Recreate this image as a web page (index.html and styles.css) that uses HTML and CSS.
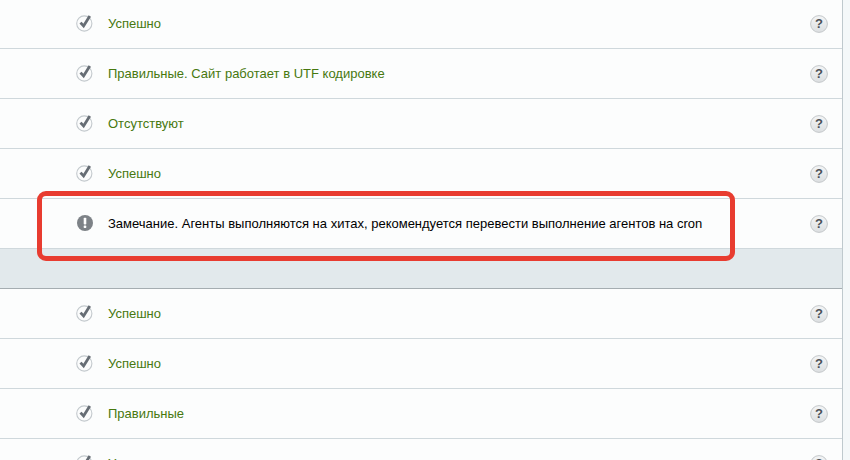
FILE: index.html
```
<!DOCTYPE html>
<html lang="ru">
<head>
<meta charset="utf-8">
<title>Проверка</title>
<link rel="stylesheet" href="styles.css">
</head>
<body>
<svg class="defs" width="0" height="0" aria-hidden="true">
  <defs>
    <linearGradient id="help-fill" x1="0" y1="0" x2="0" y2="1">
      <stop offset="0" stop-color="#f4f5f6"/>
      <stop offset="1" stop-color="#dcdfe1"/>
    </linearGradient>
  </defs>
  <symbol id="ok" viewBox="0 0 17 18">
    <circle cx="8.3" cy="9.5" r="7.6" fill="#fbfcfc" stroke="#c3c9cd" stroke-width="1.1"/>
    <path d="M4.5 8.6 L7.6 12 L13.8 2" fill="none" stroke="#666d74" stroke-width="2.8"/>
  </symbol>
  <symbol id="warn" viewBox="0 0 17 18">
    <circle cx="9" cy="9" r="8" fill="#7d8287"/>
    <rect x="7.7" y="3.8" width="2.6" height="6.8" rx="0.8" fill="#fff"/>
    <rect x="7.7" y="11.5" width="2.6" height="2.4" rx="0.6" fill="#fff"/>
  </symbol>
  <symbol id="help" viewBox="0 0 18 18">
    <circle cx="9" cy="9" r="8.4" fill="url(#help-fill)" stroke="#c4c8ca"/>
  </symbol>
</svg>
<main class="panel">
  <div class="list list-top">
    <div class="row"><svg class="status"><use href="#ok"/></svg><span class="msg">Успешно</span><span class="help"><svg class="help-bg"><use href="#help"/></svg><b class="help-q">?</b></span></div>
    <div class="row"><svg class="status"><use href="#ok"/></svg><span class="msg">Правильные. Сайт работает в UTF кодировке</span><span class="help"><svg class="help-bg"><use href="#help"/></svg><b class="help-q">?</b></span></div>
    <div class="row"><svg class="status"><use href="#ok"/></svg><span class="msg">Отсутствуют</span><span class="help"><svg class="help-bg"><use href="#help"/></svg><b class="help-q">?</b></span></div>
    <div class="row"><svg class="status"><use href="#ok"/></svg><span class="msg">Успешно</span><span class="help"><svg class="help-bg"><use href="#help"/></svg><b class="help-q">?</b></span></div>
    <div class="row"><svg class="status"><use href="#warn"/></svg><span class="msg msg-warn">Замечание. Агенты выполняются на хитах, рекомендуется перевести выполнение агентов на cron</span><span class="help"><svg class="help-bg"><use href="#help"/></svg><b class="help-q">?</b></span></div>
  </div>
  <div class="band"></div>
  <div class="list">
    <div class="row"><svg class="status"><use href="#ok"/></svg><span class="msg">Успешно</span><span class="help"><svg class="help-bg"><use href="#help"/></svg><b class="help-q">?</b></span></div>
    <div class="row"><svg class="status"><use href="#ok"/></svg><span class="msg">Успешно</span><span class="help"><svg class="help-bg"><use href="#help"/></svg><b class="help-q">?</b></span></div>
    <div class="row"><svg class="status"><use href="#ok"/></svg><span class="msg">Правильные</span><span class="help"><svg class="help-bg"><use href="#help"/></svg><b class="help-q">?</b></span></div>
    <div class="row"><svg class="status"><use href="#ok"/></svg><span class="msg">Успешно</span><span class="help"><svg class="help-bg"><use href="#help"/></svg><b class="help-q">?</b></span></div>
  </div>
  <div class="frame"></div>
</main>
</body>
</html>
```
FILE: styles.css
```
html, body {
  margin: 0;
  height: 100%;
  overflow: hidden;
  background: #f4f8f9;
}
.defs {
  display: block;
  height: 0;
}
.panel {
  position: relative;
  width: 842px;
  height: 460px;
  border-right: 1px solid #bfc9cd;
  background: #fcfdfd;
  overflow: hidden;
  font: 13px/16px "Liberation Sans", Arial, sans-serif;
}
.list-top {
  margin-top: -1px;
}
.row {
  display: flex;
  align-items: center;
  height: 49px;
  border-bottom: 1px solid #cfd8dc;
  padding-left: 76px;
  padding-right: 14px;
}
.status {
  width: 17px;
  height: 18px;
  flex: none;
  margin-top: -1px;
}
.msg {
  margin-left: 15px;
  color: #47780f;
  flex: 1;
}
.msg-warn {
  color: #000;
}
.help {
  position: relative;
  width: 18px;
  height: 18px;
  flex: none;
}
.help-bg {
  display: block;
  width: 18px;
  height: 18px;
}
.help-q {
  position: absolute;
  inset: 0;
  text-align: center;
  font: bold 13px/18px "Liberation Sans", Arial, sans-serif;
  color: #4b5157;
}
.band {
  height: 39px;
  background: #e2e9ec;
  border-bottom: 1px solid #a5adb1;
}
.frame {
  position: absolute;
  left: 37px;
  top: 191px;
  width: 698px;
  height: 70px;
  box-sizing: border-box;
  border: 5px solid #e83c30;
  border-radius: 9px;
}
```
